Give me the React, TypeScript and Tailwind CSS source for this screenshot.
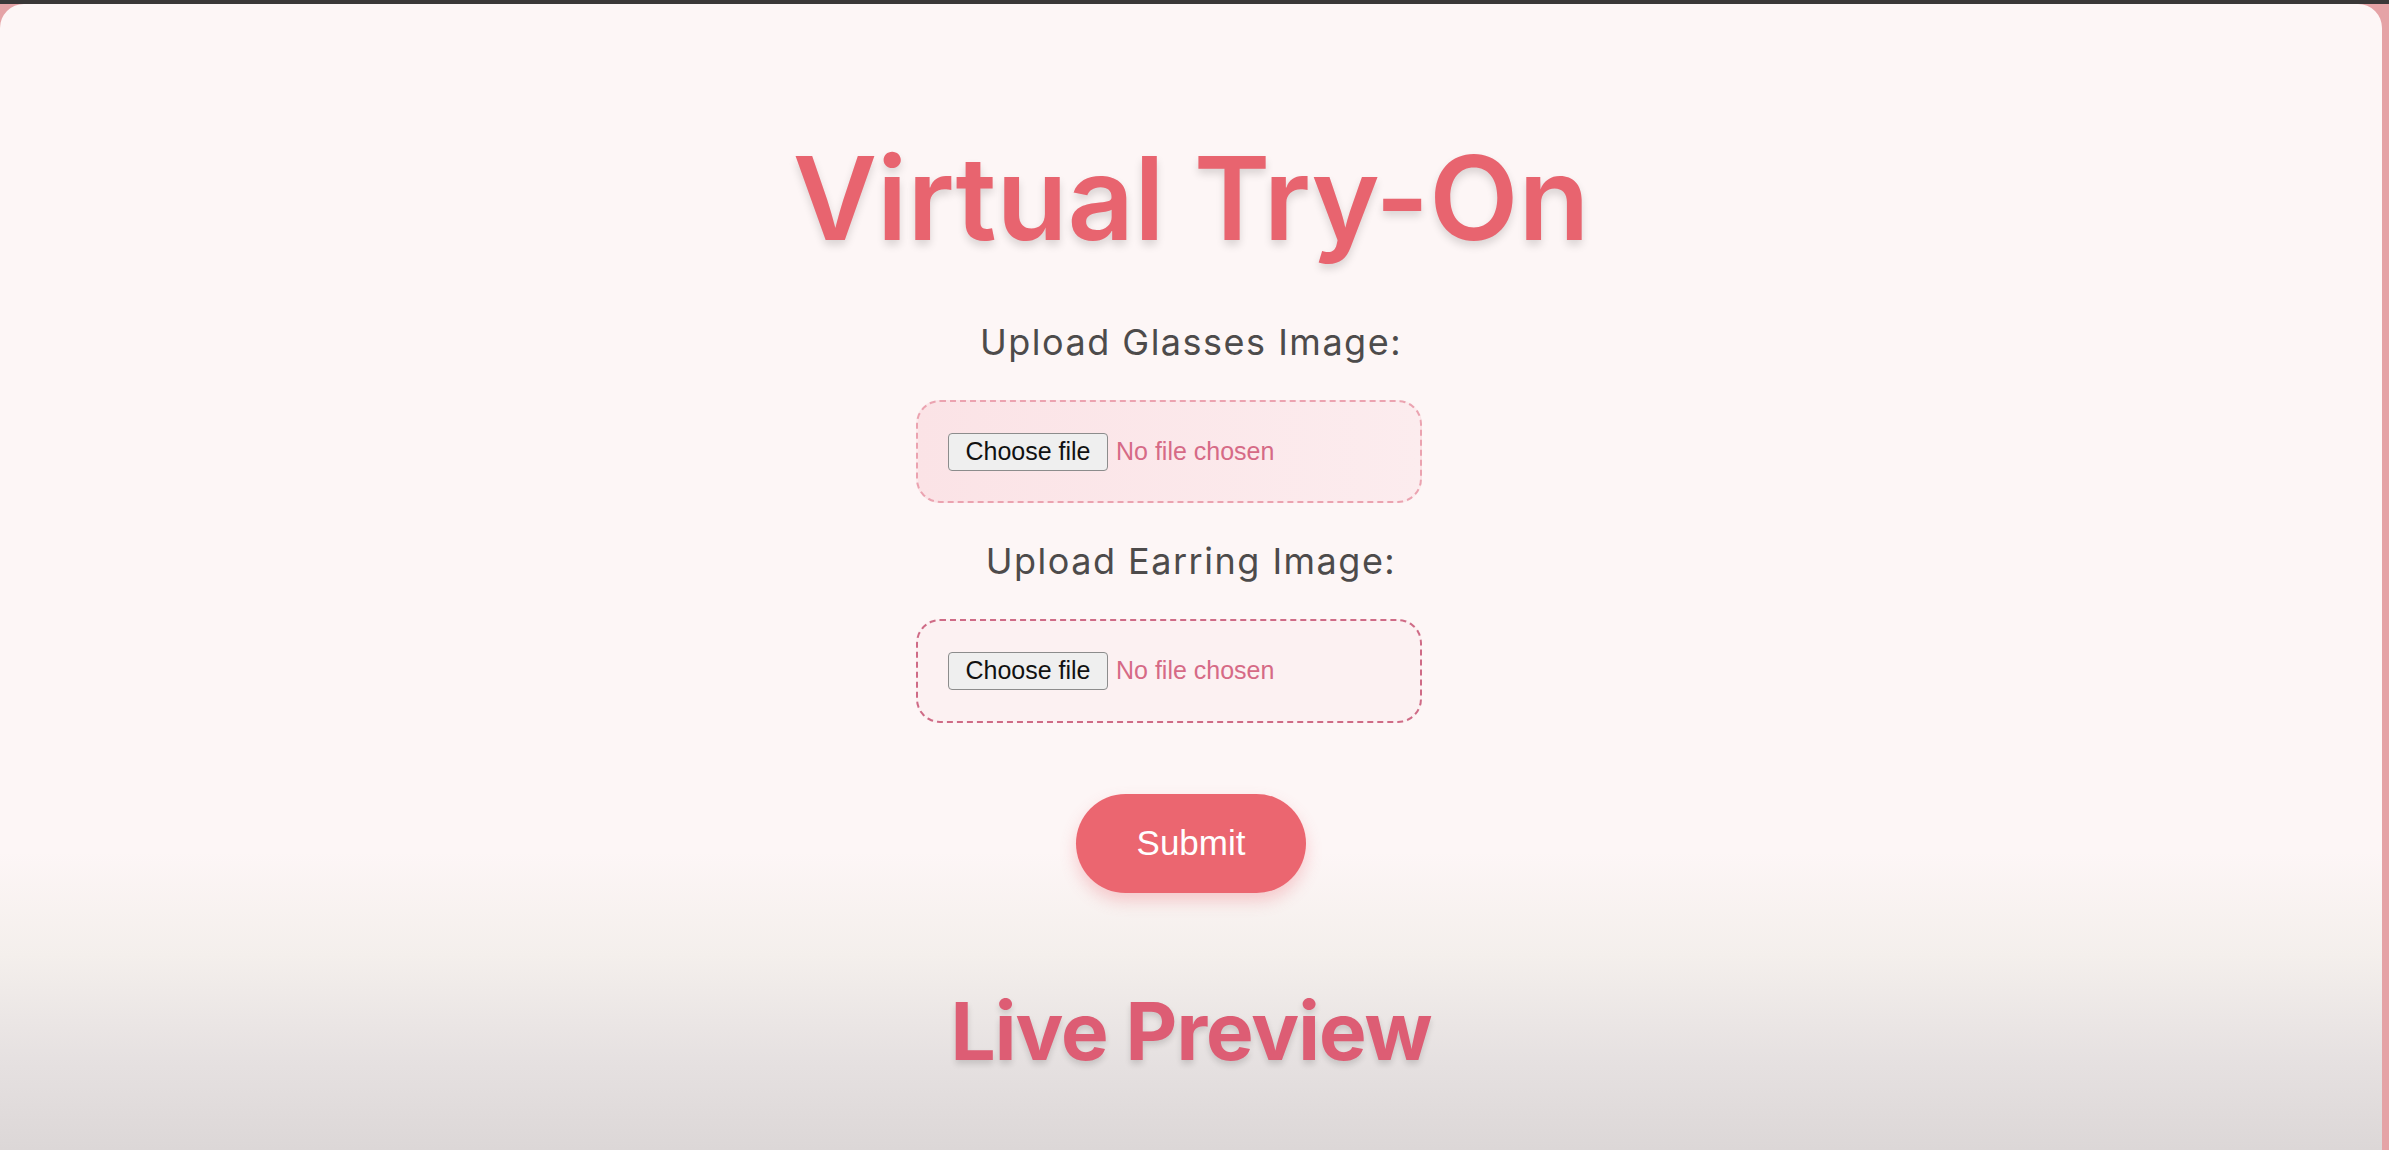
export default function App() {
  return (
    <div className="h-[1150px] w-full flex flex-col bg-[#e5a3a6] overflow-hidden">
      <div className="h-[4px] bg-[#3a3838]" />
      <div className="flex-1 mr-[7px] rounded-t-[24px] bg-[linear-gradient(180deg,#fdf6f6_0%,#fdf6f6_74%,#f4efec_83%,#e6e1e1_92%,#dcd7d7_100%)] flex flex-col items-center font-['Inter',sans-serif]">
        <h1 className="mt-[136px] text-[116px] leading-none font-semibold text-[#e8646f] tracking-[0px] [text-shadow:0_5px_8px_rgba(0,0,0,0.14)]">
          Virtual Try-On
        </h1>

        <label className="mt-[68px] text-[36px] leading-none tracking-[1.5px] text-[#4d4b4b]">Upload Glasses Image:</label>
        <div className="mt-[40px] mr-[44px] w-[506px] h-[103px] border-2 border-dashed border-[#eba3b0] rounded-[24px] bg-[linear-gradient(90deg,#fbe3e6,#fcecee)] flex items-center px-[30px]">
          <FilePick />
        </div>

        <label className="mt-[40px] text-[36px] leading-none tracking-[1.5px] text-[#4d4b4b]">Upload Earring Image:</label>
        <div className="mt-[40px] mr-[44px] w-[506px] h-[104px] border-2 border-dashed border-[#cf6b86] rounded-[24px] bg-[#fcf1f2] flex items-center px-[30px]">
          <FilePick />
        </div>

        <button className="mt-[71px] w-[230px] h-[99px] rounded-full bg-[#eb6670] text-white text-[35px] font-['Liberation_Sans',Arial,sans-serif] shadow-[0_8px_16px_rgba(235,102,112,0.3)]">
          Submit
        </button>

        <h2 className="mt-[98px] text-[80px] leading-none font-bold text-[#dd5d74] tracking-[-1px] [text-shadow:0_4px_6px_rgba(0,0,0,0.14)]">
          Live Preview
        </h2>
      </div>
    </div>
  );
}

function FilePick() {
  return (
    <div className="flex items-center font-['Liberation_Sans',Arial,sans-serif]">
      <span className="w-[160px] h-[38px] flex items-center justify-center bg-[#efefef] border border-[#8c8c8c] rounded-[4px] text-[25px] text-[#111]">
        Choose file
      </span>
      <span className="ml-[8px] text-[25px] text-[#d66a86]">No file chosen</span>
    </div>
  );
}
